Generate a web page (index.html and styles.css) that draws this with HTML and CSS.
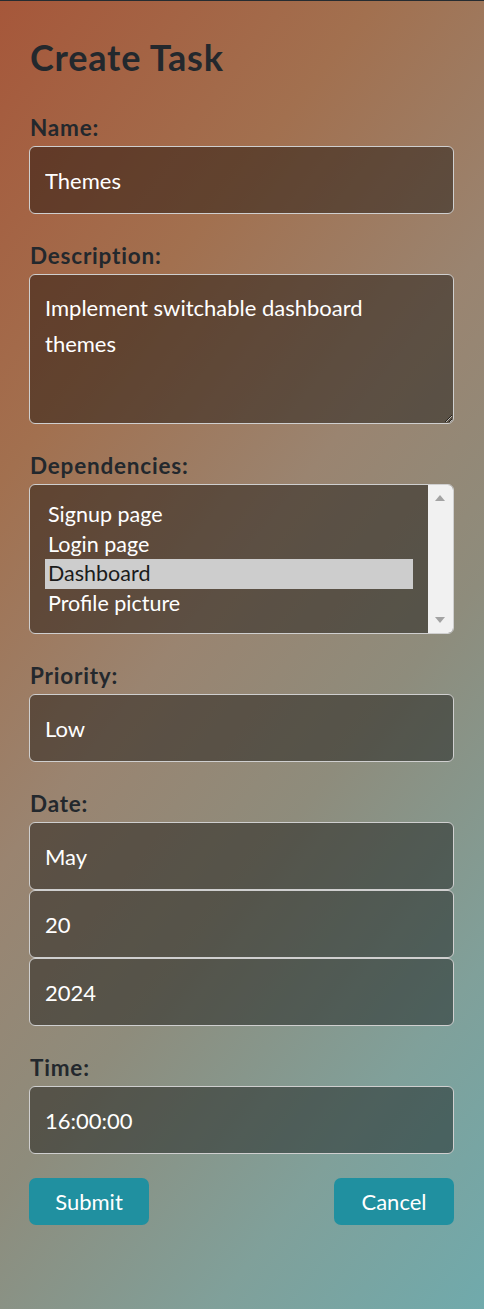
FILE: index.html
```html
<!DOCTYPE html>
<html lang="en">
<head>
<meta charset="utf-8">
<title>Create Task</title>
<link rel="stylesheet" href="styles.css">
</head>
<body>
<div class="page">
  <h1 class="title">Create Task</h1>
  <form class="form">
    <div class="field">
      <label class="label" for="name">Name:</label>
      <input class="control" id="name" type="text" value="Themes">
    </div>
    <div class="field">
      <label class="label" for="desc">Description:</label>
      <textarea class="control textarea" id="desc">Implement switchable dashboard themes</textarea>
    </div>
    <div class="field">
      <label class="label">Dependencies:</label>
      <div class="listbox" role="listbox" aria-multiselectable="true">
        <div class="option" role="option">Signup page</div>
        <div class="option" role="option">Login page</div>
        <div class="option selected" role="option" aria-selected="true">Dashboard</div>
        <div class="option" role="option">Profile picture</div>
        <div class="scrollbar"><span class="arrow up"></span><span class="arrow down"></span></div>
      </div>
    </div>
    <div class="field">
      <label class="label" for="prio">Priority:</label>
      <input class="control" id="prio" type="text" value="Low">
    </div>
    <div class="field">
      <label class="label">Date:</label>
      <div class="stack">
        <input class="control" type="text" value="May">
        <input class="control" type="text" value="20">
        <input class="control" type="text" value="2024">
      </div>
    </div>
    <div class="field field-last">
      <label class="label" for="time">Time:</label>
      <input class="control" id="time" type="text" value="16:00:00">
    </div>
    <div class="actions">
      <button class="btn" type="submit">Submit</button>
      <button class="btn" type="button">Cancel</button>
    </div>
  </form>
</div>
</body>
</html>
```
FILE: styles.css
```css
* { box-sizing: border-box; }
html, body {
  margin: 0;
  padding: 0;
  min-height: 100%;
}
body {
  font-family: Lato, "Open Sans", sans-serif;
  color: #23282d;
  background: linear-gradient(128deg, #a6573a 0%, #a2704f 25%, #9a8470 45%, #8e8c7c 62%, #80a09a 82%, #70aaac 100%);
  min-height: 1309px;
  border-top: 1px solid #262c31;
}
.page {
  padding: 35px 30px 40px 29px;
}
.title {
  margin: 0 0 0 1px;
  font-size: 36px;
  line-height: 1.2;
  font-weight: 700;
  letter-spacing: 0.8px;
}
.form {
  margin-top: 37px;
  display: flex;
  flex-direction: column;
}
.field {
  display: flex;
  flex-direction: column;
  margin-bottom: 30px;
}
.field-last { margin-bottom: 24px; }
.label {
  font-size: 22.5px;
  line-height: 24px;
  font-weight: 700;
  margin: 0 0 6px 1px;
  letter-spacing: 0.8px;
}
.control {
  display: block;
  width: 100%;
  height: 68px;
  padding: 0 15px;
  background: rgba(0, 0, 0, 0.4);
  border: 1px solid #cfcfcf;
  border-radius: 6px;
  color: #ffffff;
  font-family: Lato, "Open Sans", sans-serif;
  font-size: 22px;
  outline: none;
}
.textarea {
  height: 150px;
  padding: 15px;
  line-height: 36px;
  resize: vertical;
}
.stack { display: flex; flex-direction: column; }
.listbox {
  position: relative;
  height: 150px;
  padding: 15px 40px 15px 15px;
  background: rgba(0, 0, 0, 0.4);
  border: 1px solid #cfcfcf;
  border-radius: 6px;
  overflow: hidden;
  color: #ffffff;
  font-size: 21.5px;
}
.option {
  height: 29.5px;
  line-height: 29.5px;
  padding: 0 3px;
  white-space: nowrap;
}
.option.selected {
  background: #cdcdcd;
  color: #1b1b1b;
}
.scrollbar {
  position: absolute;
  top: 0;
  right: 0;
  bottom: 0;
  width: 25px;
  background: #f1f1f1;
}
.arrow {
  position: absolute;
  left: 7px;
  width: 0;
  height: 0;
  border-left: 5.5px solid transparent;
  border-right: 5.5px solid transparent;
}
.arrow.up { top: 10px; border-bottom: 6px solid #a3a3a3; }
.arrow.down { bottom: 10px; border-top: 6px solid #a3a3a3; }
.actions {
  display: flex;
  justify-content: space-between;
}
.btn {
  width: 120px;
  height: 47px;
  border: none;
  border-radius: 7px;
  background: #2090a0;
  color: #ffffff;
  font-family: Lato, "Open Sans", sans-serif;
  font-size: 22px;
  cursor: pointer;
}
```
